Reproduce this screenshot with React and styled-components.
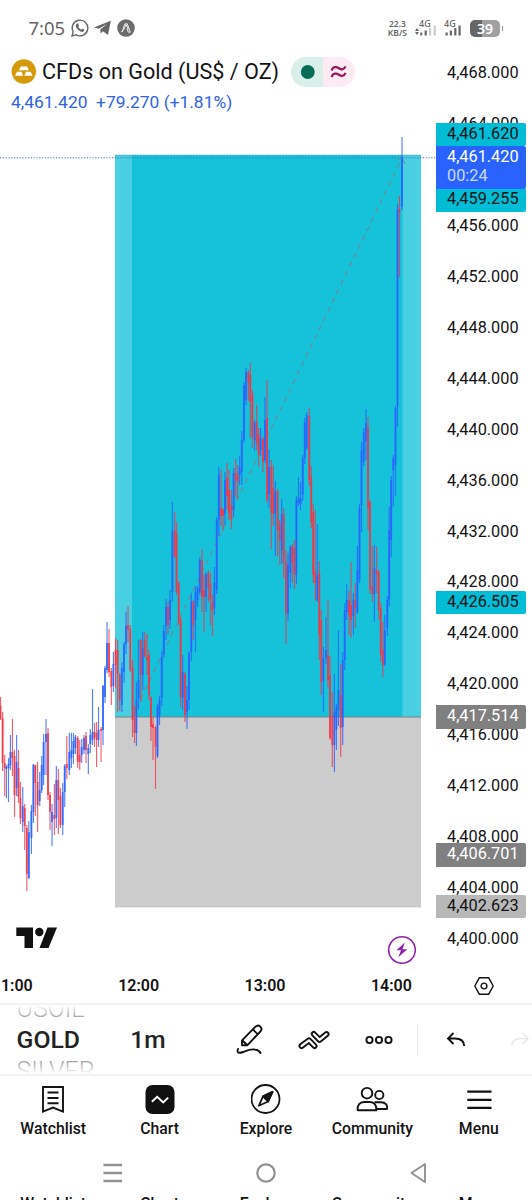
import React from "react";
import styled, { createGlobalStyle } from "styled-components";

const GlobalStyle = createGlobalStyle`
  * { box-sizing: border-box; }
  body { margin: 0; background: #fff; font-family: Roboto, "Liberation Sans", sans-serif; color: #131313; }
`;

const Screen = styled.div`
  width: 532px;
  height: 1200px;
  overflow: hidden;
  display: flex;
  flex-direction: column;
  background: #fff;
`;

const StatusBar = styled.header`
  height: 56px;
  flex: none;
  padding: 0 29px 0 28.5px;
  display: flex;
  align-items: center;
  color: #666;
  font-family: "Noto Sans", sans-serif;
`;
const Clock = styled.span`
  font-size: 18.5px;
  margin: -1px 5.5px 0 0;
`;
const StatusIcons = styled.div`
  display: flex;
  gap: 5.5px;
  align-items: center;
`;
const StatusRight = styled.div`
  margin-left: auto;
  display: flex;
  align-items: center;
`;
const Speed = styled.div`
  font-size: 8.5px;
  font-weight: 600;
  line-height: 9px;
  text-align: center;
  margin-right: 8px;
`;
const Signal = styled.div`
  width: 22px;
  margin-right: ${(p) => p.$gap}px;
  display: flex;
  flex-direction: column;
  font-size: 9px;
  font-weight: 500;
  line-height: 8px;
  span { padding-left: ${(p) => p.$indent}px; }
  svg { display: block; margin-top: -5px; }
`;
const Battery = styled.div`
  width: 30px;
  height: 17px;
  border-radius: 5px;
  background: linear-gradient(to right, #666 39%, #a0a0a0 39%);
  color: #fff;
  font-size: 14px;
  font-weight: 600;
  line-height: 17px;
  text-align: center;
`;
const BatteryTip = styled.div`
  width: 1.5px;
  height: 5px;
  margin-left: 1.5px;
  background: #999;
`;

const ChartArea = styled.main`
  height: 908px;
  flex: none;
  display: grid;
  grid-template-columns: 436px 96px;
`;
const PlotColumn = styled.div`
  position: relative;
  display: flex;
  flex-direction: column;
`;
const SymbolHeader = styled.div`
  height: 62px;
  padding-left: 11px;
`;
const TitleRow = styled.div`
  height: 30px;
  display: flex;
  align-items: center;
  svg { display: block; }
`;
const Title = styled.h1`
  margin: 1px 0 0 6px;
  width: 238px;
  font-size: 21.6px;
  font-weight: 400;
  line-height: 30px;
  white-space: nowrap;
`;
const Badge = styled.div`
  margin-left: 11px;
  margin-top: 1px;
  width: 64px;
  height: 30px;
  border-radius: 15px;
  overflow: hidden;
  display: grid;
  grid-template-columns: 1fr 1fr;
`;
const BadgeHalf = styled.div`
  background: ${(p) => p.$bg};
  display: flex;
  align-items: center;
  justify-content: center;
`;
const Quote = styled.div`
  margin-top: 6px;
  color: #2f62e6;
  font-size: 17.4px;
  line-height: 20px;
  white-space: pre;
`;
const Plot = styled.svg`
  display: block;
  flex: none;
`;
const PlotOverlay = styled.div`
  position: absolute;
  left: 16px;
  right: 20px;
  bottom: 0;
  height: 30px;
  display: flex;
  justify-content: space-between;
  align-items: center;
  svg:first-child { margin-bottom: 16px; }
`;

const PriceAxis = styled.div`
  position: relative;
  margin-top: -7.9px;
`;
const PriceLabel = styled.div`
  height: 50.94px;
  line-height: 50.94px;
  padding-left: 11px;
  font-size: 16.3px;
`;
const PriceTag = styled.div`
  position: absolute;
  left: 0;
  top: ${(p) => p.$top - 48.1}px;
  width: 89.5px;
  height: ${(p) => p.$h || 23.3}px;
  padding-left: 11px;
  border-radius: 0 2px 2px 0;
  background: ${(p) => p.$bg};
  color: ${(p) => p.$fg || "#131313"};
  font-size: 16.3px;
  line-height: 21px;
`;
const Countdown = styled.div`
  line-height: 19px;
  margin-top: -1px;
  opacity: 0.75;
`;

const TimeAxis = styled.div`
  height: 39px;
  flex: none;
  display: grid;
  grid-template-columns: 436px 96px;
  align-items: center;
`;
const Times = styled.div`
  display: flex;
  overflow: hidden;
  padding-top: 3px;
`;
const Time = styled.span`
  flex: none;
  width: 126.4px;
  text-align: center;
  font-size: 16px;
  font-weight: 600;
  &:first-child { margin-left: -51px; }
`;
const AxisSettings = styled.div`
  display: flex;
  justify-content: center;
  padding-top: 4px;
`;

const Toolbar = styled.div`
  height: 73px;
  flex: none;
  border-top: 2px solid #f2f2f2;
  border-bottom: 2px solid #f2f2f2;
  display: grid;
  grid-template-columns: 113px 105px 64px 63px 68px 5px 75px 54px;
  align-items: center;
  overflow: hidden;
`;
const SymbolWheel = styled.div`
  position: relative;
  height: 69px;
  padding-left: 16.5px;
  overflow: hidden;
  display: flex;
  flex-direction: column;
  justify-content: center;
  white-space: nowrap;
  &::after {
    content: "";
    position: absolute;
    inset: 0;
    background: linear-gradient(to bottom, #fff 0, rgba(255,255,255,0) 30%, rgba(255,255,255,0) 70%, #fff 100%);
  }
`;
const WheelItem = styled.div`
  flex: none;
  height: ${(p) => (p.$active ? 34 : 29)}px;
  line-height: ${(p) => (p.$active ? 34 : 29)}px;
  font-size: ${(p) => (p.$active ? 24.8 : 25)}px;
  font-weight: ${(p) => (p.$active ? 500 : 300)};
  color: ${(p) => (p.$active ? "#222" : "#666")};
`;
const Interval = styled.div`
  width: 70px;
  text-align: center;
  font-size: 24.5px;
  font-weight: 500;
  color: #222;
`;
const Tool = styled.div`
  display: flex;
  justify-content: center;
  svg { display: block; flex: none; }
`;
const Divider = styled.div`
  width: 1px;
  height: 32px;
  justify-self: end;
  background: #e8e8e8;
`;

const TabBar = styled.nav`
  height: 70px;
  flex: none;
  display: grid;
  grid-template-columns: repeat(5, 1fr);
`;
const Tab = styled.div`
  display: flex;
  flex-direction: column;
  align-items: center;
  padding-top: 8px;
  font-size: 15.8px;
  font-weight: 500;
  line-height: 18px;
  svg { display: block; margin-bottom: 6px; }
`;
const SystemNav = styled.div`
  height: 49px;
  flex: none;
  padding: 5px 104px 0 102px;
  display: flex;
  justify-content: space-between;
  align-items: center;
`;
const LabelStrip = styled.div`
  flex: none;
  height: 10px;
  display: grid;
  grid-template-columns: repeat(5, 1fr);
  text-align: center;
  font-size: 15.8px;
  font-weight: 500;
  line-height: 18px;
`;

const INK = "#131313";
const UP = "#2962ff";
const DOWN = "#f23645";

// One candle per entry: x, high, low, body top, body bottom (screen y), direction.
const candles = `
0.5 697 720 706 718 r;2.6 712 771 718 763 r;4.7 755 796 763 768 r;6.4 765 798 767 769 b;8.5 758 802 764 768 b;10.4 735 770 752 765 b;12.4 719 776 752 758 r;
14.5 750 817 756 795 r;16.6 735 796 762 788 b;18.5 750 803 768 797 r;20.4 782 824 798 818 r;22.7 787 832 806 822 b;24.7 804 850 808 826 r;26.8 825 891 828 874 r;
28.8 821 879 832 878 b;31.4 805 854 811 838 b;33.4 764 823 765 812 b;35.3 765 816 765 783 r;37.6 762 832 782 805 r;39.7 772 806 790 801 b;41.7 756 793 765 790 b;
43.6 734 785 742 775 b;46 719 775 734 742 b;48 728 800 733 795 r;50 792 830 795 812 r;52 804 846 812 822 b;54.3 784 835 815 819 r;56.3 766 828 780 818 b;
58.3 769 834 780 800 r;60.4 788 828 796 825 r;62.7 783 835 792 825 b;64.7 764 807 766 792 b;66.8 736 779 764 768 r;69.3 733 775 752 770 b;71.4 733 768 750 758 b;
73.4 733 764 741 754 b;75.4 735 754 737 748 b;77.7 736 768 738 762 r;79.7 740 770 755 762 r;81.7 739 763 747 755 b;84 735 754 738 750 b;86 732 763 736 750 r;
88.3 744 774 748 754 b;90.3 729 753 735 744 b;92.5 689 745 732 740 b;94.5 723 747 732 738 r;96.6 722 767 733 740 r;98.5 707 747 730 740 b;101 727 762 729 731 r;
103 685 745 686 730 b;105 666 703 668 697 b;107 622 673 643 670 b;109 629 677 643 672 r;111.3 668 705 671 687 r;113.4 652 692 664 686 b;115.5 638 688 650 665 r;
117.6 640 712 650 674 r;119.7 673 711 675 700 r;121.8 662 712 668 705 b;124 642 683 644 672 b;126 612 654 626 644 b;128 606 642 625 630 r;130.3 625 672 629 670 r;
132.5 660 737 668 720 r;134.5 706 743 718 733 r;136.4 682 746 700 733 b;138.5 640 709 680 699 b;140.6 639 702 640 675 r;142.7 632 690 648 675 b;144.7 632 655 640 657 r;
147 634 675 657 660 r;149 650 700 655 695 r;151 696 741 698 727 r;153 717 760 724 728 r;155.5 726 789 727 747 r;157.5 704 758 706 756 b;159.5 696 725 700 715 b;
161.7 651 706 657 698 b;163.8 625 658 631 655 b;166 599 640 607 626 b;168 602 634 607 625 r;170 590 629 600 620 b;172.4 502 602 531 592 b;174.6 512 558 530 556 r;
176.5 522 595 534 592 r;178.7 581 625 583 622 r;180.6 617 707 620 697 r;182.7 655 710 672 698 b;185 672 722 674 715 r;187 686 729 700 712 b;189 651 710 653 700 b;
191.3 593 661 601 652 b;193.4 600 640 602 625 r;195.5 586 652 592 620 b;197.6 586 607 588 600 b;199.8 557 595 560 592 b;202 549 612 560 597 r;204 575 632 590 597 r;
206 572 612 574 597 b;208.4 570 602 573 588 r;210.4 573 625 584 600 r;212.4 595 636 602 610 r;214.4 567 615 583 608 b;216.7 517 594 520 590 b;218.8 467 536 475 520 b;
221 470 526 508 516 r;223 508 531 510 516 r;225 472 525 480 514 b;227 463 510 478 496 r;229 470 520 490 514 r;231.4 490 529 505 520 r;233.6 468 517 473 510 b;
235.6 459 497 473 480 r;237.6 465 499 475 482 r;239.6 456 485 468 475 b;241.8 431 485 440 472 b;244 382 443 385 440 b;246 368 405 372 400 b;248.3 370 401 372 382 r;
250.3 363 438 375 402 r;252.4 390 448 395 437 r;254.6 420 451 423 440 b;256.6 405 450 422 443 r;258.6 428 467 435 455 r;260.6 428 456 438 450 b;263 437 472 439 462 r;
265 397 463 420 460 b;267 380 503 418 500 r;269 449 508 467 494 b;271.3 460 549 467 513 r;273.3 465 526 488 514 r;275.3 481 556 491 514 b;277.6 489 556 491 530 r;
279.7 520 565 525 540 r;281.7 499 564 514 550 b;283.7 508 578 514 562 r;286 550 644 562 613 r;288 553 621 565 614 b;290.3 545 588 547 573 b;292.3 544 583 546 563 r;
294.4 540 589 548 574 r;296.4 496 584 500 575 b;298.5 477 506 498 503 b;300.5 482 510 498 504 b;302.7 455 501 458 495 b;304.7 418 464 422 458 b;306.7 412 450 415 448 b;
309.3 408 486 416 480 r;311.2 466 528 477 522 r;313.2 504 583 512 575 r;315.3 510 601 571 583 r;317.3 524 602 575 600 b;319.3 561 660 573 635 r;321.3 610 695 620 682 r;
323.4 647 712 658 681 b;326 617 664 650 658 b;328 600 687 655 680 r;330 656 740 675 738 r;332.3 692 767 717 745 r;334.4 674 772 712 745 b;336.4 704 750 708 730 b;
338.4 630 726 690 710 b;340.7 664 757 695 728 r;342.7 652 745 660 727 b;344.7 603 670 610 660 b;346.7 584 620 600 612 b;349 591 635 600 615 r;351 562 638 605 620 r;
353.4 593 635 600 616 b;355.4 583 628 600 608 r;357.4 546 614 570 612 b;359.5 504 583 508 580 b;361.5 442 532 450 505 b;363.7 428 466 432 462 b;366 409 460 423 441 b;
368 417 530 427 508 r;370 500 594 502 590 r;372.4 546 602 586 594 r;374.4 545 622 568 594 b;376.6 547 593 570 574 r;378.7 570 620 572 610 r;380.7 603 662 608 655 r;
382.8 622 677 650 665 r;384.7 615 666 630 664 b;387.3 596 636 600 628 b;389.2 507 607 530 600 b;391.2 476 557 480 540 b;393.3 455 507 458 470 b;395.5 406 496 408 465 b;
397.5 204 427 209 407 b;399.4 196 277 209 213 r;402 137 210 158 207 b`
  .split(";")
  .map((row) => {
    const [x, high, low, top, bottom, dir] = row.trim().split(" ");
    return { x: +x, high: +high, low: +low, top: +top, bottom: +bottom, color: dir === "b" ? UP : DOWN };
  });

const prices = Array.from({ length: 18 }, (_, i) => `4,${468 - i * 4}.000`);
const tabs = ["Watchlist", "Chart", "Explore", "Community", "Menu"];

function PricePlot() {
  return (
    <Plot width="436" height="846" viewBox="0 118 436 846">
      <rect x="115" y="155" width="306" height="562" fill="#48cfe1" />
      <rect x="132" y="155" width="270.5" height="562" fill="#16c1da" />
      <rect x="115" y="717" width="306" height="190" fill="#ccc" />
      <path d="M115 155.2H421" stroke="#35b4c6" strokeWidth=".7" />
      <path d="M115 717H421" stroke="#74868a" strokeWidth="1.1" />
      <path d="M115 907H421" stroke="#bbb" strokeWidth=".7" />
      <path d="M132 717L402 158" stroke="#6f8a90" strokeWidth="1.2" strokeDasharray="5 5" />
      <path d="M397 160L402 157.5L405 164" fill="none" stroke="#6b8f96" strokeWidth="1" />
      {candles.map((c, i) => (
        <g key={i} fill={c.color}>
          <rect x={c.x - 0.55} y={c.high} width="1.15" height={c.low - c.high} opacity=".8" />
          <rect x={c.x - 0.95} y={c.top} width="1.9" height={c.bottom - c.top} opacity=".85" />
        </g>
      ))}
      <path d="M0 157.8H436" stroke="#3f6fb8" strokeWidth="1" strokeDasharray="1.2 1.6" />
    </Plot>
  );
}

const tabIcons = [
  <svg width="30" height="30" viewBox="0 0 30 30" fill="none" stroke={INK} strokeWidth="1.9">
    <path d="M5 3H25V27.6L15 23.6L5 27.6Z" />
    <path d="M9.5 8.5H20.5M9.5 14H20.5M9.5 19.3H20.5" />
  </svg>,
  <svg width="30" height="30" viewBox="0 0 30 30" fill="none">
    <rect x=".5" y="1" width="29" height="29" rx="7" fill="#111" />
    <path d="M6.8 17.7L12.2 12.8L18.2 18.4L23.2 13.6" stroke="#fff" strokeWidth="1.9" />
  </svg>,
  <svg width="30" height="30" viewBox="0 0 30 30" fill="none" stroke={INK} strokeWidth="1.8" strokeLinejoin="round">
    <circle cx="14.5" cy="15" r="14" />
    <path d="M21.5 7.8L12 12.3L7.8 21.8L17.2 17.5Z" />
    <path d="M21.5 7.8L12 12.3L17.2 17.5Z" fill={INK} />
  </svg>,
  <svg width="32" height="30" viewBox="0 0 32 30" fill="none" stroke={INK} strokeWidth="1.9" strokeLinejoin="round">
    <circle cx="11" cy="9.2" r="5.3" />
    <circle cx="23.3" cy="11" r="4.1" />
    <path d="M1.7 26.3C1 21.5 3.5 18 8 18H14C18.5 18 20.8 21.5 20.3 26.3Z" />
    <path d="M18.5 18.2H25C29.5 18.2 31.8 21.2 31 25H20.5" />
  </svg>,
  <svg width="30" height="30" viewBox="0 0 30 30" stroke={INK} strokeWidth="2.3">
    <path d="M3.3 7.6H27.5M3.3 15.8H27.5M3.3 23.8H27.5" />
  </svg>,
];

export default function App() {
  return (
    <Screen>
      <GlobalStyle />
      <StatusBar>
        <Clock>7:05</Clock>
        <StatusIcons>
          <svg width="18" height="18" viewBox="0 0 18 18" fill="none" stroke="#666" strokeWidth="1.4">
            <path d="M1 17L2.2 12.8A7.8 7.8 0 1 1 5.2 15.8Z" />
            <path d="M5.5 5C6.2 4 7 4.2 7.3 5L7.9 6.5C8 7 7 7.5 7.3 8C8 9.3 9 10 10 10.5C10.6 10.7 11 9.6 11.5 9.8L13 10.6C13.6 11 13 12.8 11.3 13C8.5 12.9 4.6 9 4.7 6.3Z" fill="#666" stroke="none" />
          </svg>
          <svg width="17" height="16" viewBox="0 0 17 16" fill="#666">
            <path d="M0 7.6L16.8 .8L14 15L9 11.3L6.7 13.6L6.3 9.5L13 4L4.8 8.7Z" />
          </svg>
          <svg width="18" height="18" viewBox="0 0 18 18">
            <circle cx="9" cy="9" r="8.8" fill="#6c6c6c" />
            <path d="M5 13L8 4.8H10.2L13.2 13M6.8 10.3L9 5.5L11.4 10.3M4.3 13.2L7 10.3M13.5 13.2H11.3L10 9.5" fill="none" stroke="#eee" strokeWidth="1" />
          </svg>
        </StatusIcons>
        <StatusRight>
          <Speed>22.3<br />KB/S</Speed>
          <Signal $gap={7} $indent={4}>
            <span>4G</span>
            <svg width="22" height="13" viewBox="0 0 22 13" fill="#666">
              <path d="M2 5L4 8H0ZM2 12L4 9H0Z" />
              <path d="M5.2 9.5h2v3h-2zM9.6 7.5h2.2v5H9.6z" />
              <path d="M14 5h2.2v7.5H14zM18.6 2.5h2.2v10h-2.2z" fill="#ccc" />
            </svg>
          </Signal>
          <Signal $gap={4} $indent={0}>
            <span>4G</span>
            <svg width="22" height="13" viewBox="0 0 22 13" fill="#666">
              <path d="M1.5 9.5h2.2v3H1.5zM5.8 7.5H8v5H5.8zM10.2 5h2.2v7.5h-2.2zM14.5 2.5h2.2v10h-2.2z" />
            </svg>
          </Signal>
          <Battery>39</Battery>
          <BatteryTip />
        </StatusRight>
      </StatusBar>

      <ChartArea>
        <PlotColumn>
          <SymbolHeader>
            <TitleRow>
              <svg width="25" height="25" viewBox="0 0 25 25">
                <circle cx="12.8" cy="12.5" r="12.2" fill="#d49a0c" />
                <path d="M9.7 7.5H16L17.8 11.3H8ZM6 12.8H10.6L12.2 16.7H4ZM15 12.8H19.6L21.6 16.7H13.3Z" fill="#fff" />
              </svg>
              <Title>CFDs on Gold (US$ / OZ)</Title>
              <Badge>
                <BadgeHalf $bg="#d9efea">
                  <svg width="16" height="16"><circle cx="8.8" cy="8" r="6.9" fill="#086d56" /></svg>
                </BadgeHalf>
                <BadgeHalf $bg="#fdebf3">
                  <svg width="18" height="14" viewBox="0 0 18 14" fill="none" stroke="#9c1458" strokeWidth="2.2">
                    <path d="M1.5 5.5C3 1.5 6 1.3 9 3.2C11.5 4.8 14 5 15.5 1.3M1.5 12C3 8 6 7.8 9 9.7C11.5 11.3 14 11.5 15.5 7.8" />
                  </svg>
                </BadgeHalf>
              </Badge>
            </TitleRow>
            <Quote>4,461.420  +79.270 (+1.81%)</Quote>
          </SymbolHeader>
          <PricePlot />
          <PlotOverlay>
            <svg width="42" height="30" viewBox="0 -1 42 30" fill="#111">
              <path d="M.3 -.5H17V20H8.5V8H.3Z" />
              <circle cx="23.3" cy="4" r="4.2" />
              <path d="M31.5 -.5H41L32.5 20H23.5Z" />
            </svg>
            <svg width="30" height="30" viewBox="0 0 30 30">
              <circle cx="16" cy="15" r="13.3" fill="#fff" stroke="#8e24aa" strokeWidth="1.6" />
              <path d="M18.8 7.5L10.5 15.3H15L12.3 22.3L21.3 14.2H16.5Z" fill="#8e24aa" />
            </svg>
          </PlotOverlay>
        </PlotColumn>
        <PriceAxis>
          {prices.map((p) => <PriceLabel key={p}>{p}</PriceLabel>)}
          <PriceTag $top={123} $bg="#00bcd4">4,461.620</PriceTag>
          <PriceTag $top={188.4} $bg="#00bcd4">4,459.255</PriceTag>
          <PriceTag $top={146} $h={43} $bg="#2962ff" $fg="#fff">
            4,461.420
            <Countdown>00:24</Countdown>
          </PriceTag>
          <PriceTag $top={591} $bg="#00bcd4">4,426.505</PriceTag>
          <PriceTag $top={705.4} $bg="#808080" $fg="#fff">4,417.514</PriceTag>
          <PriceTag $top={843.4} $bg="#808080" $fg="#fff">4,406.701</PriceTag>
          <PriceTag $top={895} $bg="#b8b8b8">4,402.623</PriceTag>
        </PriceAxis>
      </ChartArea>

      <TimeAxis>
        <Times>
          {["11:00", "12:00", "13:00", "14:00"].map((t) => <Time key={t}>{t}</Time>)}
        </Times>
        <AxisSettings>
          <svg width="20" height="18" viewBox="0 0 20 18" fill="none" stroke={INK} strokeWidth="1.4">
            <path d="M5.3 .8H14.7L19.2 9L14.7 17.2H5.3L.8 9Z" />
            <circle cx="10" cy="9" r="2.9" />
          </svg>
        </AxisSettings>
      </TimeAxis>

      <Toolbar>
        <SymbolWheel>
          <WheelItem>USOIL</WheelItem>
          <WheelItem $active>GOLD</WheelItem>
          <WheelItem>SILVER</WheelItem>
        </SymbolWheel>
        <Interval>1m</Interval>
        <Tool>
          <svg width="28" height="32" viewBox="0 0 28 32" fill="none" stroke={INK} strokeWidth="1.9" strokeLinejoin="round" strokeLinecap="round">
            <path d="M6 16.3L19.5 2.7C21.3 1 23 1.3 24.3 2.6C26 4.3 26 5.7 24.5 7.3L11.5 21.2H6Z M17 5.5L21.8 10.3M6.5 16.5L11.2 21" />
            <path d="M2 25C.5 29 3 29.5 7 28C12 26 15 24.7 19 25.5C22 26 23.5 27 24.5 29" />
          </svg>
        </Tool>
        <Tool>
          <svg width="34" height="22" viewBox="0 0 34 22" fill="none" strokeLinecap="round" strokeLinejoin="round">
            <path d="M4.5 17L12 11.3L17.5 17" stroke={INK} strokeWidth="6" />
            <path d="M4.5 17L12 11.3L17.5 17" stroke="#fff" strokeWidth="2.2" />
            <path d="M16.8 5L22.5 10.8L29.5 5.2" stroke={INK} strokeWidth="6" />
            <path d="M16.8 5L22.5 10.8L29.5 5.2" stroke="#fff" strokeWidth="2.2" />
          </svg>
        </Tool>
        <Tool>
          <svg width="28" height="10" viewBox="0 0 28 10" fill="none" stroke={INK} strokeWidth="1.9">
            <circle cx="4.5" cy="5" r="3.1" /><circle cx="14" cy="5" r="3.1" /><circle cx="23.5" cy="5" r="3.1" />
          </svg>
        </Tool>
        <Divider />
        <Tool>
          <svg width="20" height="16" viewBox="0 0 20 16" fill="none" stroke={INK} strokeWidth="1.9">
            <path d="M7.5 1L2 6.5L7.5 12M2 6.5H9C14.5 6.5 18 9 18.2 14" />
          </svg>
        </Tool>
        <Tool>
          <svg width="20" height="16" viewBox="0 0 20 16" fill="none" stroke="#e8e8e8" strokeWidth="1.6">
            <path d="M12.5 1L18 6.5L12.5 12M18 6.5H11C5.5 6.5 2 9 1.8 14" />
          </svg>
        </Tool>
      </Toolbar>

      <TabBar>
        {tabs.map((t, i) => <Tab key={t}>{tabIcons[i]}{t}</Tab>)}
      </TabBar>
      <SystemNav>
        <svg width="20" height="22" stroke="#929292" strokeWidth="2.4"><path d="M1.5 3H20M1.5 11H20M1.5 19H20" /></svg>
        <svg width="22" height="22" fill="none" stroke="#929292" strokeWidth="2.2"><circle cx="11" cy="11" r="8.7" /></svg>
        <svg width="19" height="22" fill="none" stroke="#929292" strokeWidth="1.9" strokeLinejoin="round"><path d="M16 2V20L2.5 11Z" /></svg>
      </SystemNav>
      <LabelStrip>
        {tabs.map((t) => <span key={t}>{t}</span>)}
      </LabelStrip>
    </Screen>
  );
}
